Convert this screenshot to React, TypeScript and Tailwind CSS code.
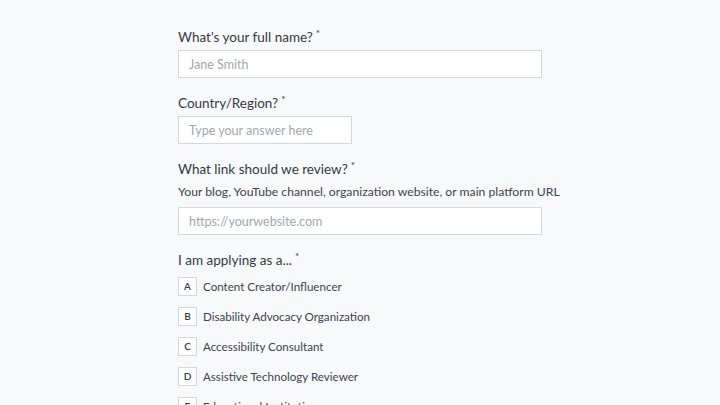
const options = [
    { key: 'A', label: 'Content Creator/Influencer' },
    { key: 'B', label: 'Disability Advocacy Organization' },
    { key: 'C', label: 'Accessibility Consultant' },
    { key: 'D', label: 'Assistive Technology Reviewer' },
    { key: 'E', label: 'Educational Institution' },
];

function Label({ children }: { children: React.ReactNode }) {
    return (
        <div className="text-[13.5px] leading-[20px] text-[#333a44]">
            {children}
            <sup className="ml-[3px] text-[10px] text-[#333a44]">*</sup>
        </div>
    );
}

export default function App() {
    return (
        <div
            className="h-[405px] w-full overflow-hidden bg-[#f8f9fb]"
            style={{ fontFamily: 'Lato, "Open Sans", sans-serif' }}
        >
            <form className="ml-[178px] w-[364px] pt-[27px]">
                <div className="mb-[15px]">
                    <Label>What's your full name?</Label>
                    <input
                        type="text"
                        placeholder="Jane Smith"
                        className="mt-[3px] h-[28px] w-full border border-[#d3d6db] bg-white px-[10px] text-[12.5px] text-[#333] outline-none placeholder:text-[#a3a7ad]"
                    />
                </div>

                <div className="mb-[15px]">
                    <Label>Country/Region?</Label>
                    <input
                        type="text"
                        placeholder="Type your answer here"
                        className="mt-[3px] h-[28px] w-[174px] border border-[#d3d6db] bg-white px-[10px] text-[12.5px] text-[#333] outline-none placeholder:text-[#a3a7ad]"
                    />
                </div>

                <div className="mb-[15px]">
                    <Label>What link should we review?</Label>
                    <p className="mt-[4px] whitespace-nowrap text-[12.2px] leading-[18px] text-[#3d434c]">
                        Your blog, YouTube channel, organization website, or main platform URL
                    </p>
                    <input
                        type="text"
                        placeholder="https://yourwebsite.com"
                        className="mt-[6px] h-[28px] w-full border border-[#d3d6db] bg-white px-[10px] text-[12.5px] text-[#333] outline-none placeholder:text-[#a3a7ad]"
                    />
                </div>

                <div>
                    <Label>I am applying as a...</Label>
                    <div className="mt-[7px] flex flex-col gap-[11px]">
                        {options.map((o) => (
                            <label key={o.key} className="flex h-[19px] items-center gap-[6px]">
                                <span className="flex h-[19px] w-[19px] items-center justify-center border border-[#d3d6db] bg-white text-[10px] font-semibold text-[#333a44]">
                                    {o.key}
                                </span>
                                <span className="whitespace-nowrap text-[11.6px] leading-[19px] text-[#3d434c]">
                                    {o.label}
                                </span>
                            </label>
                        ))}
                    </div>
                </div>
            </form>
        </div>
    );
}
